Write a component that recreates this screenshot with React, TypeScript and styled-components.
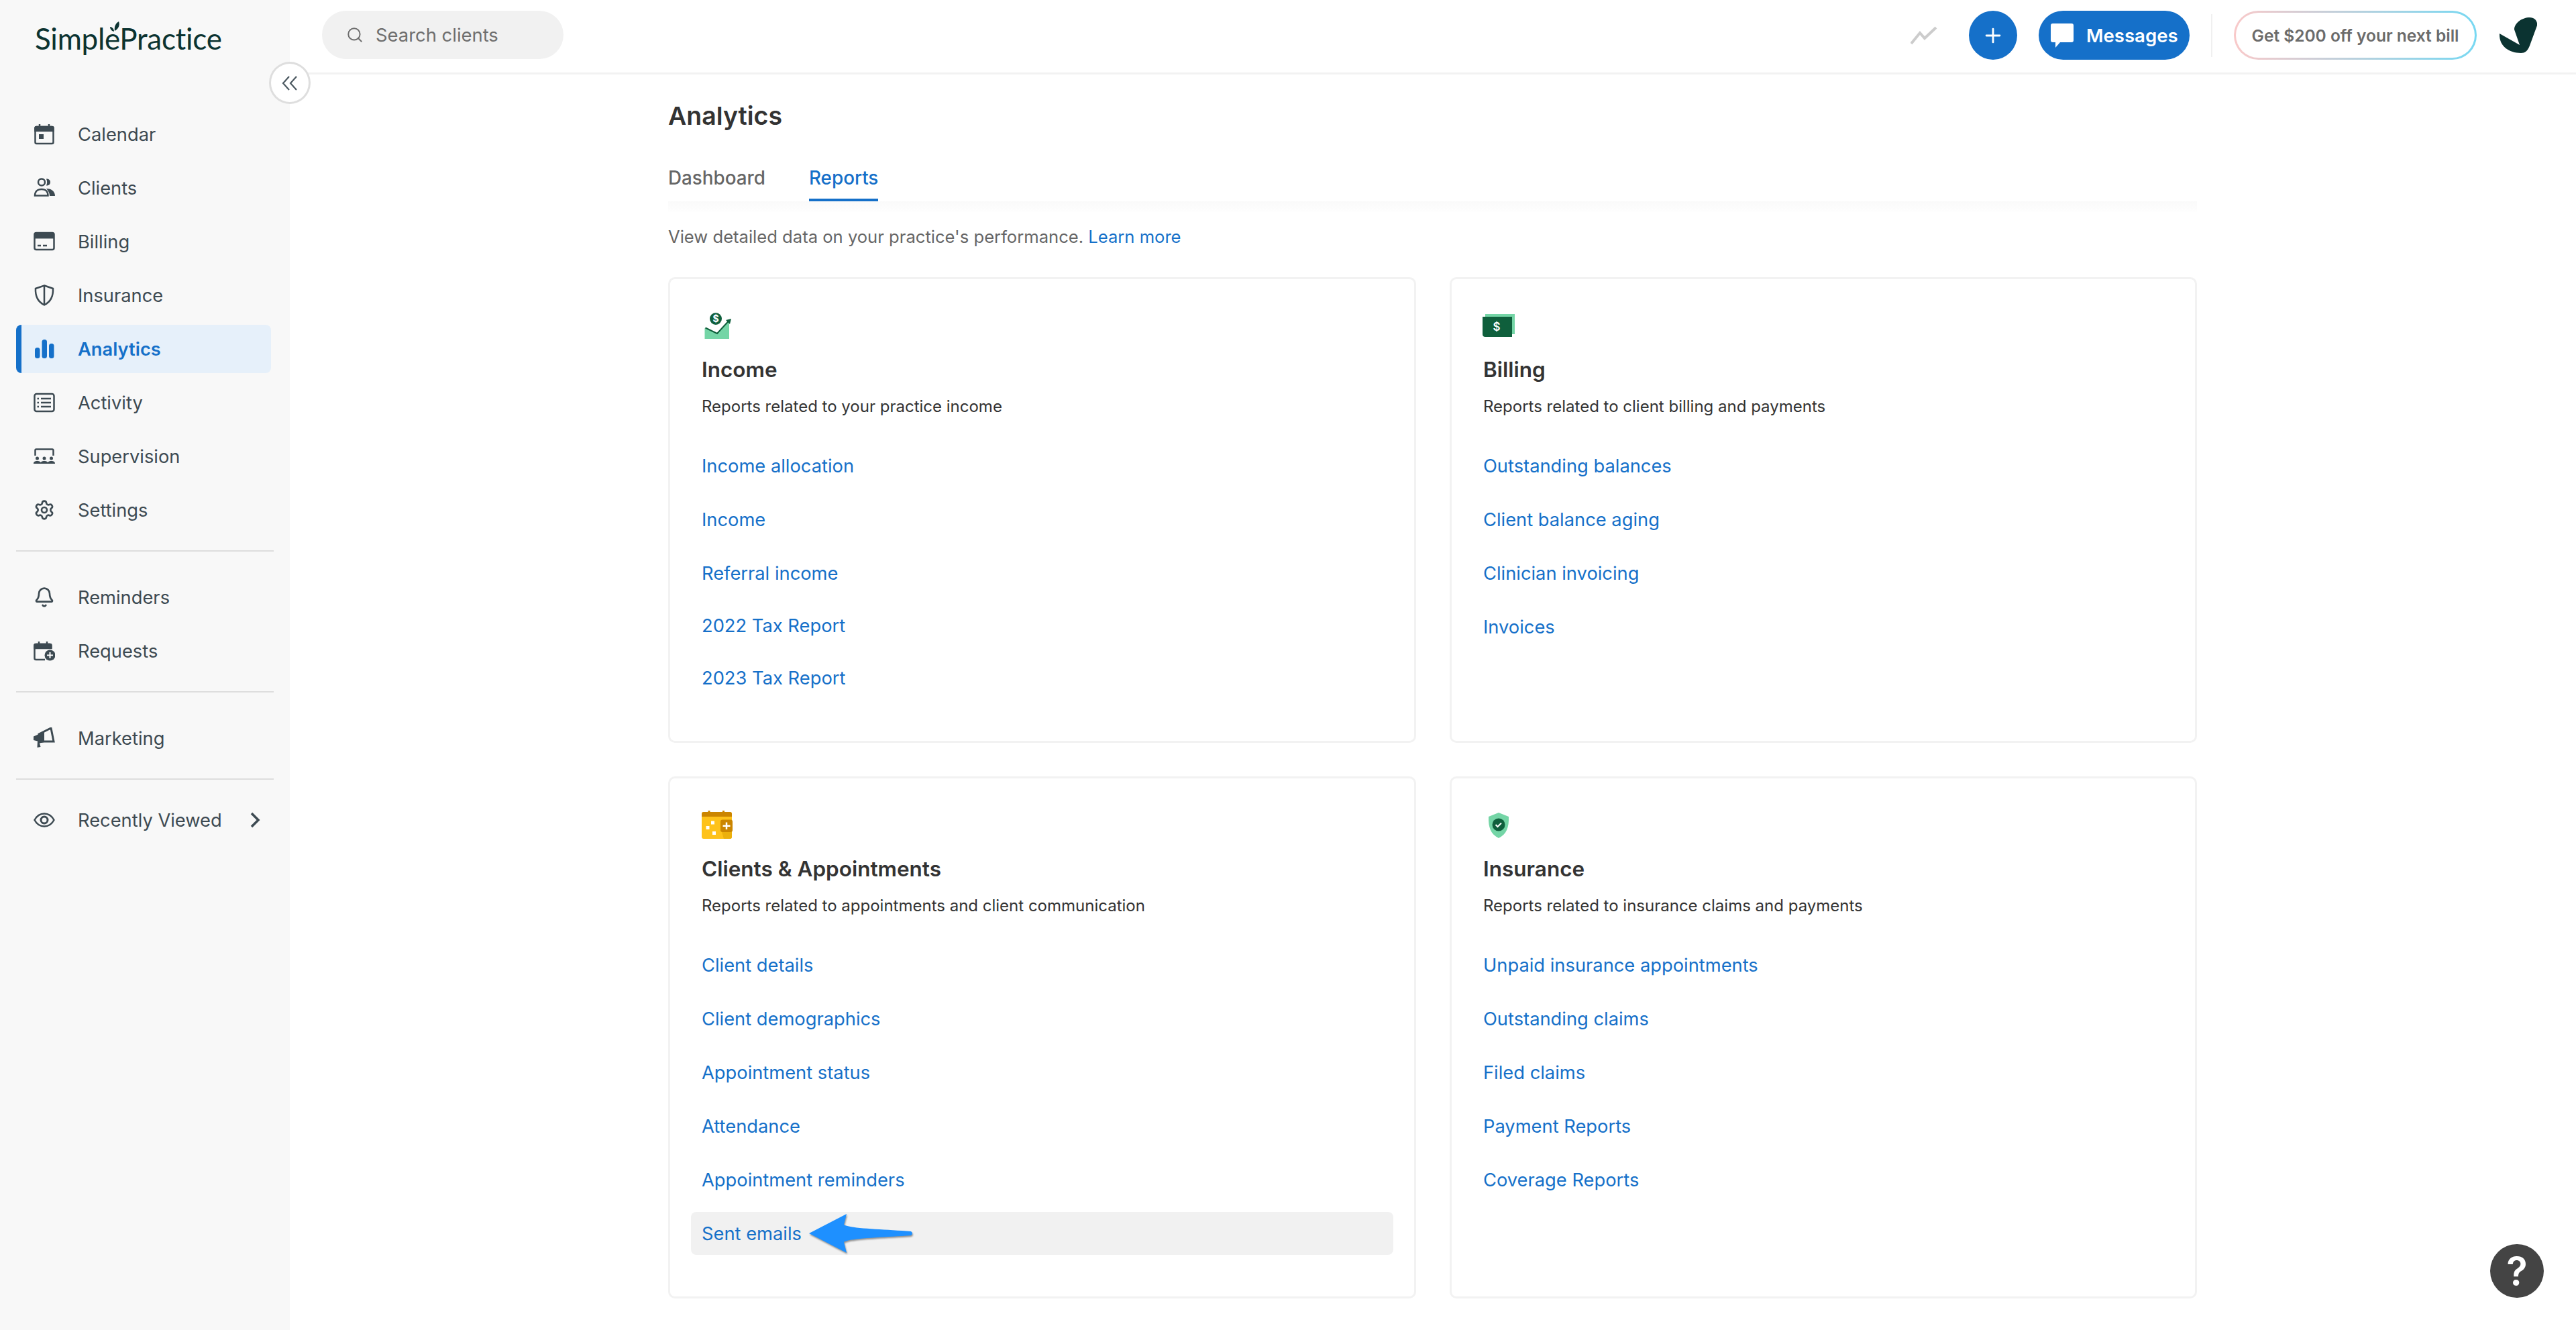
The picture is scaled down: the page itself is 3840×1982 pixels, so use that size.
import React from 'react';
import styled, { createGlobalStyle } from 'styled-components';
import { Bell, Plus, Search, Settings } from 'lucide-react';

const GlobalStyle = createGlobalStyle`
    html, body {
        margin: 0;
        padding: 0;
        background: #fff;
        font-family: Inter, "Liberation Sans", sans-serif;
        color: #333;
    }
    * { box-sizing: border-box; }
`;

const Page = styled.div`
    position: relative;
    display: flex;
    width: 3840px;
    height: 1982px;
    overflow: hidden;
`;

const Sidebar = styled.aside`
    width: 432px;
    flex: none;
    background: #f8f8f8;
`;

const LogoBlock = styled.div`
    position: relative;
    height: 164px;
    padding: 29px 0 0 52px;
`;

const LogoText = styled.div`
    font-family: Lato, sans-serif;
    font-size: 44px;
    line-height: 56px;
    letter-spacing: -0.3px;
    color: #0b3331;
`;

const LogoLeaf = styled.svg`
    position: absolute;
    left: 162px;
    top: 32px;
    width: 18px;
    height: 18px;
`;

const CollapseButton = styled.button`
    position: absolute;
    left: 401px;
    top: 92px;
    width: 62px;
    height: 63px;
    display: flex;
    align-items: center;
    justify-content: center;
    border: 3px solid #dedede;
    border-radius: 50%;
    background: #fff;
    color: #4d5a62;
    padding: 0;
`;

const NavRow = styled.a<{ $active?: boolean }>`
    position: relative;
    display: flex;
    align-items: center;
    height: 72px;
    margin: 0 28px 8px 24px;
    padding: 0 16px 0 26px;
    gap: 34px;
    border-radius: 8px;
    overflow: hidden;
    white-space: nowrap;
    font-size: 27.3px;
    font-weight: ${p => (p.$active ? 600 : 400)};
    color: ${p => (p.$active ? '#1570c9' : '#3d4a52')};
    background: ${p => (p.$active ? '#e6f0fa' : 'transparent')};
    &::before {
        content: '';
        display: ${p => (p.$active ? 'block' : 'none')};
        position: absolute;
        left: 0;
        top: 0;
        bottom: 0;
        width: 8px;
        background: #1570c9;
    }
`;

const NavIcon = styled.svg`
    width: 32px;
    height: 32px;
    flex: none;
    fill: none;
    stroke: currentColor;
    stroke-width: 2.5;
`;

const NavChevron = styled.svg`
    width: 16px;
    height: 24px;
    margin-left: auto;
    fill: none;
    stroke: currentColor;
    stroke-width: 3.6;
`;

const NavDivider = styled.div<{ $after: number }>`
    height: 2px;
    margin: 24px 24px ${p => p.$after}px;
    background: #dedede;
`;

const Main = styled.main`
    flex: 1;
    min-width: 0;
`;

const TopBar = styled.header`
    display: flex;
    align-items: flex-start;
    height: 111px;
    padding: 16px 58px 0 48px;
    border-bottom: 3px solid #f2f2f2;
`;

const SearchBox = styled.div`
    display: flex;
    align-items: center;
    gap: 18px;
    width: 360px;
    height: 72px;
    padding-left: 36px;
    border-radius: 36px;
    background: #f1f1f1;
    color: #6e6e6e;
    font-size: 27.4px;
`;

const TopActions = styled.div`
    display: flex;
    align-items: center;
    margin-left: auto;
    height: 73px;
`;

const TrendIcon = styled.svg`
    width: 40px;
    height: 28px;
    margin-right: 47px;
`;

const RoundButton = styled.button`
    display: flex;
    align-items: center;
    justify-content: center;
    width: 72px;
    height: 73px;
    padding: 0;
    border: 0;
    border-radius: 50%;
    background: #1570c9;
    color: #fff;
`;

const MessagesButton = styled.button`
    display: flex;
    align-items: center;
    gap: 19px;
    width: 225px;
    height: 73px;
    margin-left: 32px;
    padding: 0 0 0 18px;
    border: 0;
    border-radius: 37px;
    background: #1570c9;
    color: #fff;
    font-family: inherit;
    font-size: 27.6px;
    font-weight: 600;
`;

const ActionDivider = styled.div`
    width: 2px;
    height: 64px;
    margin: 0 32px;
    background: #f0f0f0;
`;

const PromoButton = styled.button`
    width: 362px;
    height: 73px;
    padding: 0;
    border: 3px solid transparent;
    border-radius: 37px;
    background: linear-gradient(#fff, #fff) padding-box,
        linear-gradient(90deg, #f9c9c9, #77d8f2) border-box;
    color: #6b6b6b;
    font-family: inherit;
    font-size: 24.5px;
    font-weight: 600;
`;

const AvatarMark = styled.svg`
    width: 57px;
    height: 53px;
    margin-left: 33px;
`;

const Content = styled.div`
    width: 2279px;
    margin-left: 564px;
`;

const Title = styled.h1`
    margin: 38px 0 34px;
    font-size: 37.5px;
    line-height: 48px;
    font-weight: 600;
    color: #333;
`;

const Tabs = styled.nav`
    position: relative;
    display: flex;
    gap: 65px;
    border-bottom: 2px solid #eee;
    &::after {
        content: '';
        position: absolute;
        left: 0;
        right: 0;
        top: 100%;
        height: 16px;
        background: linear-gradient(#fafafa, #fefefe);
    }
`;

const Tab = styled.a<{ $active?: boolean }>`
    padding: 16px 0 13px;
    font-size: 27.8px;
    line-height: 36px;
    font-weight: 500;
    color: ${p => (p.$active ? '#1570c9' : '#666')};
    border-bottom: 4px solid ${p => (p.$active ? '#1570c9' : 'transparent')};
`;

const Intro = styled.p`
    margin: 34px 0 43px;
    font-size: 25.6px;
    line-height: 34px;
    color: #666;
`;

const TextLink = styled.a`
    color: #1570c9;
`;

const CardGrid = styled.div`
    display: grid;
    grid-template-columns: 1115px 1114px;
    grid-template-rows: 694px 778px;
    column-gap: 50px;
    row-gap: 50px;
`;

const Card = styled.section`
    padding: 46px 31px 0;
    border: 3px solid #f2f2f2;
    border-radius: 10px;
`;

const CardIconBox = styled.div`
    height: 48px;
    margin-left: 16px;
    svg {
        display: block;
        overflow: visible;
    }
`;

const CardTitle = styled.h2`
    margin: 21px 0 0 16px;
    font-size: 31.5px;
    line-height: 40px;
    font-weight: 600;
    color: #333;
`;

const CardSub = styled.p`
    margin: 18px 0 39px 16px;
    font-size: 24px;
    line-height: 34px;
    color: #333;
`;

const ReportList = styled.ul`
    display: flex;
    flex-direction: column;
    margin: 0;
    padding: 0;
    list-style: none;
`;

const ReportRow = styled.li<{ $highlighted?: boolean; $compact?: boolean }>`
    position: relative;
    display: flex;
    align-items: center;
    height: 64px;
    margin-bottom: ${p => (p.$compact ? 14 : 16)}px;
    padding-left: 16px;
    border-radius: 8px;
    background: ${p => (p.$highlighted ? '#f1f1f1' : 'transparent')};
    font-size: 27.3px;
    color: #1570c9;
`;

const PointerArrow = styled.svg`
    position: absolute;
    left: 176px;
    top: 3px;
    width: 156px;
    height: 60px;
    filter: drop-shadow(1px 2px 1px rgba(0, 0, 0, 0.4));
`;

const HelpButton = styled.button`
    position: absolute;
    left: 3712px;
    top: 1854px;
    display: flex;
    align-items: center;
    justify-content: center;
    width: 80px;
    height: 80px;
    padding: 0;
    border: 0;
    border-radius: 50%;
    background: #444;
    color: #fff;
    font-family: inherit;
    font-size: 58px;
    font-weight: 600;
`;

const IconCalendar = () => (
    <NavIcon viewBox="0 0 32 32">
        <rect x="2.5" y="5" width="27" height="25" rx="2" />
        <path d="M2.5 11h27V7a2 2 0 0 0-2-2h-23a2 2 0 0 0-2 2z" fill="currentColor" />
        <path d="M9 1v5M23 1v5" />
        <rect x="8" y="16" width="7" height="7" fill="currentColor" stroke="none" />
    </NavIcon>
);

const IconClients = () => (
    <NavIcon viewBox="0 0 32 32">
        <circle cx="12" cy="7.5" r="5" />
        <path d="M2 27.5c0-6 4-9.5 10-9.5s9.500 3.500 9.500 9.500z" />
        <path d="M19 2.500c4 0 6 2 6 5s-2 5-6 5c1.500-3 1.500-7 0-10z" fill="currentColor" stroke="none" />
        <path d="M19 17c6 0 13 3 13 11h-8c0-4-2-8-5-11z" fill="currentColor" stroke="none" />
    </NavIcon>
);

const IconBilling = () => (
    <NavIcon viewBox="0 0 32 32">
        <rect x="1.500" y="3" width="29" height="25" rx="2.500" />
        <path d="M1.500 5.500a2.500 2.500 0 0 1 2.500-2.500h24a2.500 2.500 0 0 1 2.500 2.500v6h-29z" fill="currentColor" stroke="none" />
        <path d="M6 22h5M14 22h6" />
    </NavIcon>
);

const IconShield = () => (
    <NavIcon viewBox="0 0 32 32">
        <path d="M16 1.500l13 4.500c.5 10-2 19-13 24.500C5 25 2.500 16 3 6z" />
        <path d="M16 2v28" />
    </NavIcon>
);

const IconBars = () => (
    <NavIcon viewBox="0 0 32 32">
        <rect x="2" y="14" width="7.500" height="16" rx="3.500" fill="currentColor" stroke="none" />
        <rect x="12.500" y="2" width="7.500" height="28" rx="3.500" fill="currentColor" stroke="none" />
        <rect x="23" y="8" width="7.500" height="22" rx="3.500" fill="currentColor" stroke="none" />
    </NavIcon>
);

const IconActivity = () => (
    <NavIcon viewBox="0 0 32 32">
        <rect x="1.500" y="3" width="29" height="26" rx="3" />
        <path d="M11 10h15M11 16h15M11 22h15" />
        <path d="M5.500 10h2.500M5.500 16h2.500M5.500 22h2.500" />
    </NavIcon>
);

const IconSupervision = () => (
    <NavIcon viewBox="0 -2 32 32">
        <path d="M2.500 13V5a1.500 1.500 0 0 1 1.500-1.500h24a1.500 1.500 0 0 1 1.500 1.500v8" />
        <g fill="currentColor" stroke="none">
            <circle cx="5.500" cy="17" r="2.500" />
            <circle cx="16" cy="17" r="2.500" />
            <circle cx="26.500" cy="17" r="2.500" />
            <path d="M0 25c0-3 2-4 5.500-4s5.500 1 5.500 4zM10.500 25c0-3 2-4 5.500-4s5.500 1 5.500 4zM21 25c0-3 2-4 5.500-4s5.500 1 5.500 4z" />
        </g>
    </NavIcon>
);

const IconRequests = () => (
    <NavIcon viewBox="0 0 32 32">
        <path d="M26 12V8a2 2 0 0 0-2-2H3.500a2 2 0 0 0-2 2v19a2 2 0 0 0 2 2H17" />
        <path d="M1.500 12h25V8a2 2 0 0 0-2-2H3.500a2 2 0 0 0-2 2z" fill="currentColor" />
        <path d="M8 2v5M20 2v5" />
        <circle cx="24.500" cy="22.500" r="8" fill="currentColor" stroke="none" />
        <path d="M24.500 18v9M20 22.500h9" stroke="#fff" strokeWidth="2" />
    </NavIcon>
);

const IconMegaphone = () => (
    <NavIcon viewBox="0 0 32 32">
        <path d="M0 13.500L8 10v11l-8-2z" fill="currentColor" stroke="none" />
        <path d="M8 10L26 1l4 20-22 0z" fill="none" strokeWidth="3" />
        <path d="M8 9.500l8-3v15l-8 1z" fill="currentColor" stroke="none" />
        <path d="M6 20l9 0 1 2-7 1.500 1.500 5.500-5 1z" fill="currentColor" stroke="none" />
    </NavIcon>
);

const IconEye = () => (
    <NavIcon viewBox="0 0 32 32">
        <path d="M1.500 16C5 9.500 10 6.500 16 6.500S27 9.500 30.500 16C27 22.500 22 25.500 16 25.500S5 22.500 1.500 16z" />
        <circle cx="16" cy="16" r="5" strokeWidth="3" />
    </NavIcon>
);

const IncomeIcon = () => (
    <svg width="48" height="48" viewBox="0 0 48 48">
        <path d="M4.500 27L23 35L41 16V43H4.500z" fill="#74d5a6" />
        <path d="M5.500 26.500L23 35L40 16.500" fill="none" stroke="#0f5f3c" strokeWidth="2" />
        <path d="M36 15L44 13L42 21z" fill="#0f5f3c" />
        <circle cx="21" cy="13" r="9" fill="#0f5f3c" />
        <text x="21" y="18" textAnchor="middle" fontFamily="Inter, sans-serif" fontSize="14" fontWeight="700" fill="#fff">$</text>
    </svg>
);

const BillingIcon = () => (
    <svg width="48" height="48" viewBox="0 0 48 48">
        <rect x="3" y="6" width="44" height="30" fill="#74d5a6" />
        <path d="M-1 10H43V40H3a4 4 0 0 1-4-4z" fill="#0f5f3c" />
        <text x="20" y="31" textAnchor="middle" fontFamily="Inter, sans-serif" fontSize="17" fontWeight="600" fill="#fff">$</text>
    </svg>
);

const ClientsIcon = () => (
    <svg width="48" height="48" viewBox="0 0 48 48">
        <rect x="0" y="4" width="45" height="40" rx="3" fill="#fec21a" />
        <path d="M0 11V7a3 3 0 0 1 3-3h39a3 3 0 0 1 3 3v4z" fill="#cb8500" />
        <rect x="9.500" y="2" width="3" height="3" fill="#cb8500" />
        <rect x="31" y="2" width="3" height="3" fill="#cb8500" />
        <path d="M30 34h15v7a3 3 0 0 1-3 3H33z" fill="#ecb00c" />
        <g fill="#fff">
            <rect x="14" y="17.500" width="5" height="5" />
            <rect x="6.500" y="25" width="5" height="5" />
            <rect x="16" y="33" width="5" height="5" />
        </g>
        <rect x="28" y="15.500" width="18" height="18.500" rx="3" fill="#cb8500" />
        <path d="M37 19.500v10.500M31.500 24.700h11" stroke="#fff" strokeWidth="2.500" />
    </svg>
);

const InsuranceIcon = () => (
    <svg width="48" height="48" viewBox="0 0 48 48">
        <path d="M23 5l15 6c.5 16-3 26-15 32C11 37 7.500 27 8 11z" fill="#74d5a6" />
        <circle cx="23" cy="23" r="9.500" fill="#0f5f3c" />
        <path d="M18.500 23l3 3 5.500-5.500" fill="none" stroke="#fff" strokeWidth="2" />
    </svg>
);

const primaryNav = [
    { label: 'Calendar', icon: <IconCalendar /> },
    { label: 'Clients', icon: <IconClients /> },
    { label: 'Billing', icon: <IconBilling /> },
    { label: 'Insurance', icon: <IconShield /> },
    { label: 'Analytics', icon: <IconBars />, active: true },
    { label: 'Activity', icon: <IconActivity /> },
    { label: 'Supervision', icon: <IconSupervision /> },
    { label: 'Settings', icon: <Settings size={32} strokeWidth={2} /> },
];

const cards = [
    {
        title: 'Income',
        sub: 'Reports related to your practice income',
        icon: <IncomeIcon />,
        links: ['Income allocation', 'Income', 'Referral income', '2022 Tax Report', '2023 Tax Report'],
        compactFrom: 2,
    },
    {
        title: 'Billing',
        sub: 'Reports related to client billing and payments',
        icon: <BillingIcon />,
        links: ['Outstanding balances', 'Client balance aging', 'Clinician invoicing', 'Invoices'],
    },
    {
        title: 'Clients & Appointments',
        sub: 'Reports related to appointments and client communication',
        icon: <ClientsIcon />,
        links: ['Client details', 'Client demographics', 'Appointment status', 'Attendance', 'Appointment reminders', 'Sent emails'],
        highlight: 'Sent emails',
    },
    {
        title: 'Insurance',
        sub: 'Reports related to insurance claims and payments',
        icon: <InsuranceIcon />,
        links: ['Unpaid insurance appointments', 'Outstanding claims', 'Filed claims', 'Payment Reports', 'Coverage Reports'],
    },
];

const App = () => {
    return (
        <Page>
            <GlobalStyle />
            <Sidebar>
                <LogoBlock>
                    <LogoText>SimplePractice</LogoText>
                    <LogoLeaf viewBox="0 0 18 18">
                        <path d="M9 14C8 8 10 3 15 0c2 5 0 11-6 14z" fill="#0b3331" />
                        <path d="M8 15C4 14 2 11 2 8c3 0 6 3 6 7z" fill="#0b3331" />
                    </LogoLeaf>
                </LogoBlock>
                {primaryNav.map(item => (
                    <NavRow key={item.label} $active={item.active}>
                        {item.icon}
                        {item.label}
                    </NavRow>
                ))}
                <NavDivider $after={32} />
                <NavRow><Bell size={32} strokeWidth={2} />Reminders</NavRow>
                <NavRow><IconRequests />Requests</NavRow>
                <NavDivider $after={32} />
                <NavRow><IconMegaphone />Marketing</NavRow>
                <NavDivider $after={24} />
                <NavRow>
                    <IconEye />
                    Recently Viewed
                    <NavChevron viewBox="0 0 16 24">
                        <path d="M3 2l10 10L3 22" />
                    </NavChevron>
                </NavRow>
            </Sidebar>
            <CollapseButton>
                <svg width="24" height="22" viewBox="0 0 24 22" fill="none" stroke="currentColor" strokeWidth="2.2">
                    <path d="M11 1L2 11l9 10M22 1l-9 10 9 10" />
                </svg>
            </CollapseButton>
            <Main>
                <TopBar>
                    <SearchBox>
                        <Search size={26} strokeWidth={1.8} />
                        Search clients
                    </SearchBox>
                    <TopActions>
                        <TrendIcon viewBox="0 0 40 28">
                            <path d="M1 26L14 10l7 8L38 2" fill="none" stroke="#ccc" strokeWidth="4" />
                        </TrendIcon>
                        <RoundButton><Plus size={34} strokeWidth={2} /></RoundButton>
                        <MessagesButton>
                            <svg width="34" height="36" viewBox="0 0 34 36">
                                <path d="M3 0h28a3 3 0 0 1 3 3v22a3 3 0 0 1-3 3H14l-7 8v-8H3a3 3 0 0 1-3-3V3a3 3 0 0 1 3-3z" fill="#fff" />
                            </svg>
                            Messages
                        </MessagesButton>
                        <ActionDivider />
                        <PromoButton>Get $200 off your next bill</PromoButton>
                        <AvatarMark viewBox="0 0 57 53">
                            <path d="M1 24L31 41L23 18C23 8 35 0 46 0C54 0 58 6 57 12L46 42C43 50 39 53 33 53C14 53 0 42 1 24Z" fill="#0b3331" />
                        </AvatarMark>
                    </TopActions>
                </TopBar>
                <Content>
                    <Title>Analytics</Title>
                    <Tabs>
                        <Tab>Dashboard</Tab>
                        <Tab $active>Reports</Tab>
                    </Tabs>
                    <Intro>
                        View detailed data on your practice's performance. <TextLink>Learn more</TextLink>
                    </Intro>
                    <CardGrid>
                        {cards.map(card => (
                            <Card key={card.title}>
                                <CardIconBox>{card.icon}</CardIconBox>
                                <CardTitle>{card.title}</CardTitle>
                                <CardSub>{card.sub}</CardSub>
                                <ReportList>
                                    {card.links.map((link, i) => (
                                        <ReportRow
                                            key={link}
                                            $highlighted={card.highlight === link}
                                            $compact={card.compactFrom !== undefined && i >= card.compactFrom}
                                        >
                                            {link}
                                            {card.highlight === link && (
                                                <PointerArrow viewBox="0 0 156 60">
                                                    <path d="M0 29L56 0L52 16C60 22 110 23 152 26Q156 29 152 32C110 35 60 36 52 42L56 58Z" fill="#1e90ff" />
                                                </PointerArrow>
                                            )}
                                        </ReportRow>
                                    ))}
                                </ReportList>
                            </Card>
                        ))}
                    </CardGrid>
                </Content>
            </Main>
            <HelpButton>?</HelpButton>
        </Page>
    );
};

export default App;
